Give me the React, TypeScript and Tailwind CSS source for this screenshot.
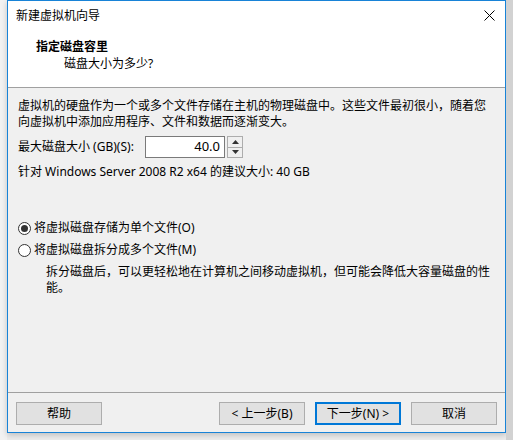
import React, { useState } from "react";

const font = { fontFamily: '"Noto Sans", "Noto Sans CJK SC", sans-serif' };

// Windows-style radio button
const Radio: React.FC<{ checked: boolean; label: string; onClick: () => void }> = ({ checked, label, onClick }) => (
    <div className="flex items-center h-4 leading-4 cursor-default" onClick={onClick}>
        <span className="w-[13px] h-[13px] rounded-full border border-[#333] bg-white flex items-center justify-center mr-[3px]">
            {checked && <span className="w-[7px] h-[7px] rounded-full bg-[#333]" />}
        </span>
        <span>{label}</span>
    </div>
);

const WizardButton: React.FC<{ label: string; primary?: boolean }> = ({ label, primary }) => (
    <button
        className={
            primary
                ? "w-[86px] h-[23px] bg-[#e1e1e1] border-2 border-[#0078d7] text-[12px] text-black leading-none"
                : "w-[86px] h-[23px] bg-[#e1e1e1] border border-[#adadad] text-[12px] text-black leading-none"
        }
    >
        {label}
    </button>
);

const App: React.FC = () => {
    const [size, setSize] = useState<number>(40);
    const [mode, setMode] = useState<"single" | "split">("single");

    return (
        <div className="w-[513px] h-[440px] bg-[#ececec] flex text-[12px] text-black" style={font}>
            <div className="w-[7px] h-full bg-[#f2f2f2]" />

            {/* Dialog window */}
            <div className="w-[499px] h-[433px] border border-[#1883d7] bg-[#f0f0f0] flex flex-col shadow-[0_2px_6px_rgba(0,0,0,0.2)]">
                {/* Title bar */}
                <div className="h-[29px] bg-white flex items-center justify-between pl-2 pr-[10px]">
                    <span>新建虚拟机向导</span>
                    <svg width="11" height="11" viewBox="0 0 11 11">
                        <path d="M0.5 0.5 L10.5 10.5 M10.5 0.5 L0.5 10.5" stroke="#000" strokeWidth="1" />
                    </svg>
                </div>

                {/* Header */}
                <div className="h-[58px] bg-white border-b border-[#a0a0a0] pt-[9px]">
                    <div className="pl-[28px] font-bold leading-4">指定磁盘容里</div>
                    <div className="pl-[56px] leading-4 mt-px">磁盘大小为多少?</div>
                </div>

                {/* Body */}
                <div className="flex-1 px-[10px] pt-[10px]">
                    <div className="leading-4">虚拟机的硬盘作为一个或多个文件存储在主机的物理磁盘中。这些文件最初很小，随着您</div>
                    <div className="leading-4">向虚拟机中添加应用程序、文件和数据而逐渐变大。</div>

                    <div className="flex items-center mt-[6px] h-[22px]">
                        <span className="w-[127px]">最大磁盘大小 (GB)(S):</span>
                        <div className="w-[80px] h-[22px] bg-white border border-[#7a7a7a] flex items-center justify-end pr-[4px] text-[13px]">
                            {size.toFixed(1)}
                        </div>
                        <div className="ml-[2px] w-[16px] h-[22px] border border-[#adadad] bg-[#f0f0f0] flex flex-col">
                            <button className="flex-1 flex items-center justify-center border-b border-[#adadad]" onClick={() => setSize(size + 1)}>
                                <svg width="7" height="4" viewBox="0 0 7 4"><path d="M0 4 L3.5 0 L7 4 Z" fill="#333" /></svg>
                            </button>
                            <button className="flex-1 flex items-center justify-center" onClick={() => setSize(Math.max(1, size - 1))}>
                                <svg width="7" height="4" viewBox="0 0 7 4"><path d="M0 0 L7 0 L3.5 4 Z" fill="#333" /></svg>
                            </button>
                        </div>
                    </div>

                    <div className="mt-[6px] leading-4">针对 Windows Server 2008 R2 x64 的建议大小: 40 GB</div>

                    <div className="mt-[40px] flex flex-col gap-[6px]">
                        <Radio checked={mode === "single"} label="将虚拟磁盘存储为单个文件(O)" onClick={() => setMode("single")} />
                        <Radio checked={mode === "split"} label="将虚拟磁盘拆分成多个文件(M)" onClick={() => setMode("split")} />
                    </div>
                    <p className="mt-[6px] pl-[28px] leading-4">
                        拆分磁盘后，可以更轻松地在计算机之间移动虚拟机，但可能会降低大容量磁盘的性能。
                    </p>
                </div>

                {/* Footer */}
                <div className="h-[40px] border-t border-[#a0a0a0] pt-[9px] px-2 flex items-start">
                    <WizardButton label="帮助" />
                    <div className="ml-auto flex gap-[10px]">
                        <WizardButton label="< 上一步(B)" />
                        <WizardButton label="下一步(N) >" primary />
                        <WizardButton label="取消" />
                    </div>
                </div>
            </div>

            <div className="w-[7px] h-full bg-[#d2d2d2]" />
        </div>
    );
};

export default App;
